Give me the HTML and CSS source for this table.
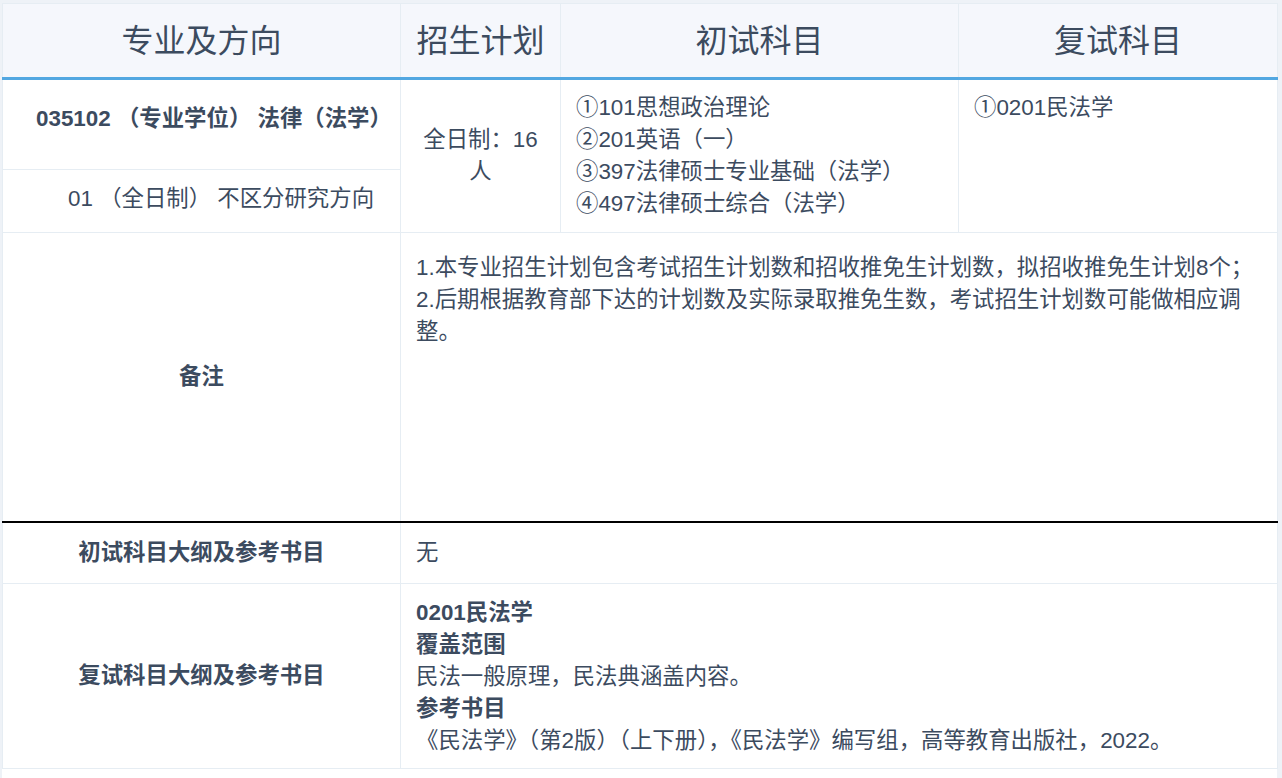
FILE: index.html
```html
<!DOCTYPE html>
<html lang="zh-CN">
<head>
<meta charset="utf-8">
<title>招生专业目录</title>
<link rel="stylesheet" href="styles.css">
</head>
<body>
<div class="page">
  <table class="plan">
    <colgroup>
      <col class="col-major">
      <col class="col-quota">
      <col class="col-first">
      <col class="col-second">
    </colgroup>
    <thead>
      <tr>
        <th>专业及方向</th>
        <th>招生计划</th>
        <th>初试科目</th>
        <th>复试科目</th>
      </tr>
    </thead>
    <tbody>
      <tr class="row-major">
        <td class="major">035102 （专业学位） 法律（法学）</td>
        <td class="quota" rowspan="2">全日制：16人</td>
        <td class="subjects" rowspan="2">①101思想政治理论<br>②201英语（一）<br>③397法律硕士专业基础（法学）<br>④497法律硕士综合（法学）</td>
        <td class="subjects top" rowspan="2">①0201民法学</td>
      </tr>
      <tr class="row-direction">
        <td class="direction">01 （全日制） 不区分研究方向</td>
      </tr>
      <tr class="row-note">
        <td class="label">备注</td>
        <td class="note" colspan="3">1.本专业招生计划包含考试招生计划数和招收推免生计划数，拟招收推免生计划8个；<br>2.后期根据教育部下达的计划数及实际录取推免生数，考试招生计划数可能做相应调整。</td>
      </tr>
      <tr class="row-outline row-first">
        <td class="label">初试科目大纲及参考书目</td>
        <td class="content" colspan="3">无</td>
      </tr>
      <tr class="row-outline">
        <td class="label">复试科目大纲及参考书目</td>
        <td class="content detail" colspan="3"><strong>0201民法学</strong><br><strong>覆盖范围</strong><br>民法一般原理，民法典涵盖内容。<br><strong>参考书目</strong><br>《民法学》（第2版）（上下册），《民法学》编写组，高等教育出版社，2022。</td>
      </tr>
    </tbody>
  </table>
</div>
</body>
</html>
```
FILE: styles.css
```css
* {
  box-sizing: border-box;
}

html,
body {
  margin: 0;
  padding: 0;
}

body {
  background: #eef2f7;
  font-family: "Liberation Sans", "Noto Sans CJK SC", sans-serif;
  color: #3c4b5f;
}

.page {
  margin: 3px 5px 0 2px;
  background: #ffffff;
  min-height: 775px;
}

.plan {
  width: 100%;
  border-collapse: collapse;
  table-layout: fixed;
  font-size: 22.4px;
  line-height: 32.5px;
}

.col-major {
  width: 398px;
}

.col-quota {
  width: 160px;
}

.col-first {
  width: 398px;
}

.col-second {
  width: 319px;
}

.plan th {
  background: #f5f7fc;
  font-weight: normal;
  font-size: 32px;
  line-height: 40px;
  height: 75px;
  padding: 0 10px;
  border: 1px solid #e6edf3;
  border-bottom: 3px solid #52a7e1;
  text-align: center;
  vertical-align: middle;
}

.plan td {
  border: 1px solid #e6edf3;
  padding: 12px 15px;
  vertical-align: middle;
}

.row-major {
  height: 90px;
}

.row-direction {
  height: 63px;
}

.plan td.major {
  font-weight: bold;
  text-align: left;
  white-space: nowrap;
  padding: 10px 0 20px 33px;
}

.plan td.direction {
  text-align: left;
  white-space: nowrap;
  padding: 10px 0 14px 65px;
}

.quota {
  text-align: center;
}

.plan td.subjects {
  text-align: left;
  line-height: 32px;
  padding-top: 12px;
  padding-bottom: 12px;
}

.plan td.top {
  vertical-align: top;
}

.row-note {
  height: 289px;
}

.row-note td {
  border-bottom: 2px solid #000000;
}

.label {
  font-weight: bold;
  text-align: center;
}

.plan td.note {
  vertical-align: top;
  padding: 19px 22px 12px 15px;
  line-height: 32px;
}

.content {
  text-align: left;
}

.plan td.detail {
  line-height: 32px;
  padding-top: 13px;
  padding-bottom: 11px;
}

.row-first {
  height: 62px;
}
```
